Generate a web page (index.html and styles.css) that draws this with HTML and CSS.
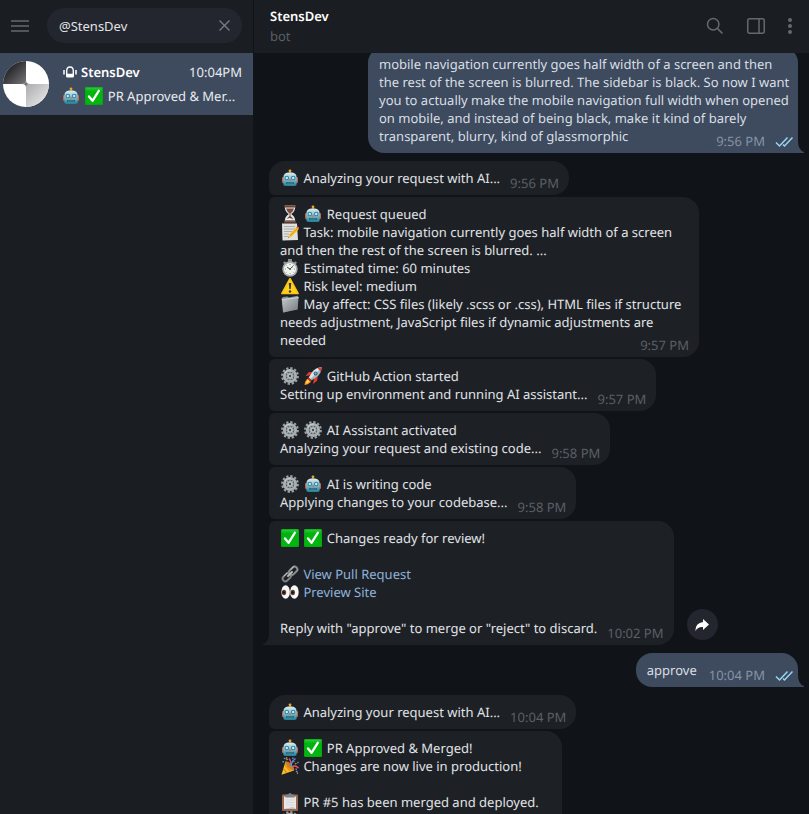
FILE: index.html
```html
<!DOCTYPE html>
<html lang="en">
<head>
<meta charset="utf-8">
<title>StensDev</title>
<link rel="stylesheet" href="styles.css">
</head>
<body>
<svg class="sprite" aria-hidden="true">
  <defs>
    <linearGradient id="g-robot" x1="0" y1="0" x2="0" y2="1"><stop offset="0" stop-color="#d9eef2"/><stop offset=".5" stop-color="#8fb9c4"/><stop offset="1" stop-color="#1f7f96"/></linearGradient>
    <linearGradient id="g-check" x1="0" y1="0" x2="0" y2="1"><stop offset="0" stop-color="#2fd03c"/><stop offset=".25" stop-color="#00b40d"/><stop offset="1" stop-color="#00b80e"/></linearGradient>
    <linearGradient id="g-metal" x1="0" y1="0" x2="1" y2="1"><stop offset="0" stop-color="#c3cacd"/><stop offset="1" stop-color="#74797c"/></linearGradient>
    <linearGradient id="g-dark" x1="0" y1="0" x2="1" y2="1"><stop offset=".1" stop-color="#111114"/><stop offset="1" stop-color="#77777b"/></linearGradient>
    <linearGradient id="g-light" x1="0" y1="0" x2="1" y2="1"><stop offset="0" stop-color="#aaaaad"/><stop offset="1" stop-color="#f2f2f2"/></linearGradient>
    <symbol id="robot" viewBox="0 0 18 18">
      <path d="M9 2v3" stroke="#c98a20" stroke-width="1.2"/><circle cx="9" cy="1.8" r="1.4" fill="#f5a623"/>
      <rect x="1" y="8" width="2" height="6" rx="1" fill="#b96a52"/><rect x="15" y="8" width="2" height="6" rx="1" fill="#b96a52"/>
      <path d="M2.3 9Q2.5 3.8 7 3.6h4q4.500.2 4.700 5.400v6q0 2-2 2H4.300q-2 0-2-2z" fill="url(#g-robot)"/>
      <circle cx="5.800" cy="9" r="2.300" fill="#2d83a5"/><circle cx="12.200" cy="9" r="2.300" fill="#2d83a5"/>
      <circle cx="5.800" cy="9" r="1.200" fill="#b9f2ff"/><circle cx="12.200" cy="9" r="1.200" fill="#b9f2ff"/>
      <path d="M9 9.600l1.200 2H7.800z" fill="#e05d4b"/><rect x="5" y="13" width="8" height="2" rx="1" fill="#155c70"/><path d="M6.500 14h5" stroke="#86c9d5" stroke-width="1" stroke-dasharray="1 1"/>
    </symbol>
    <symbol id="check" viewBox="0 0 18 18"><rect width="18" height="18" rx="1.500" fill="url(#g-check)"/><rect x=".5" y=".5" width="17" height="17" rx="1.500" fill="none" stroke="#0a9c16" stroke-opacity=".6"/><path d="M4 9.500l3.500 4.300 6.300-10" fill="none" stroke="#fff" stroke-width="2.300" stroke-linecap="round" stroke-linejoin="round"/></symbol>
    <symbol id="hourglass" viewBox="0 0 18 18">
      <path d="M3.800 2h10.400q0 4.500-4 7 4 2.500 4 7H3.800q0-4.500 4-7Q3.800 6.500 3.800 2z" fill="#dfe6e8"/>
      <path d="M5 3.500h8Q12 7 9 8.600 6 7 5 3.500z" fill="#7d4b35"/><path d="M8.600 8h.8v3q2.600 1.500 3 4.500H5.600q.4-3 3-4.500z" fill="#6f3d2b"/><path d="M4.500 15.500q3.500-5 9 0z" fill="#f3f6f7"/>
      <path d="M3 0h12v2.600H3zM3 15.400h12V18H3z" fill="#5d3b30"/><path d="M4 .7h10M4 16.300h10" stroke="#a07761" stroke-width=".7"/>
    </symbol>
    <symbol id="memo" viewBox="0 0 18 18">
      <path d="M1 .5h15l1 16.500-15.500.5z" fill="#dfe2df"/><path d="M3 3.500h11M3 6h11M3 8.500h9M3 11h5M3 13.500h4" stroke="#9ba09f" stroke-width=".8"/>
      <path d="M7 14.800l1-3L15 4.500q2 0 2.500 2L10 14z" fill="#f9bf22"/><path d="M15 4.500l1.100-1q2.200.2 2 2l-.6 1q-.5-1.600-2.500-2z" fill="#e35d50"/><path d="M7 14.800l1-3 2 2.200z" fill="#e9c28f"/><path d="M7 14.800l.4-1 .6.700z" fill="#333"/><path d="M9 13l7-7" stroke="#dd8d10" stroke-width=".7"/>
    </symbol>
    <symbol id="stopwatch" viewBox="0 0 18 18">
      <path d="M7 0h4v3H7zM2 3.800l1.600-1.600 1.800 1.600-1.600 1.700zM14.400 2.200L16 3.800l-1.600 1.700-1.600-1.700z" fill="#87908f"/>
      <circle cx="9" cy="10" r="7.700" fill="#a4abae"/><circle cx="9" cy="10" r="6.100" fill="#f1f2ee"/><path d="M9 5v1M9 14v1M4 10h1M13 10h1M5.500 6.500l.6.600M12.500 6.500l-.6.600M5.500 13.500l.6-.6M12.500 13.500l-.6-.6" stroke="#777" stroke-width=".8"/><path d="M9 10l3-2.700M9 10L6.500 8.500" stroke="#454b4d" stroke-width="1" stroke-linecap="round"/><circle cx="9" cy="10" r="1" fill="#5e6668"/>
    </symbol>
    <symbol id="warning" viewBox="0 0 18 18"><path d="M9 1.700L17 16.500H1z" fill="#fdd21c" stroke="#fdc414" stroke-width="1.700" stroke-linejoin="round"/><path d="M7.800 6h2.400l-.5 6H8.300z" fill="#34383a"/><circle cx="9" cy="14.500" r="1.200" fill="#34383a"/></symbol>
    <symbol id="folder" viewBox="0 0 18 18"><path d="M.5 3.500L2 2l4.500-.6L8 2.500l8.500-1.700 1 1.200-.8 12.500-14.700 3z" fill="#879196"/><path d="M1 4.500L17.500 2.500 15.500 14 2.500 17.500z" fill="url(#g-metal)"/><path d="M1 4.500L17.500 2.500" fill="none" stroke="#e0e7e9" stroke-width=".8"/></symbol>
    <symbol id="gear" viewBox="0 0 18 18">
      <circle cx="9" cy="9" r="7.800" fill="none" stroke="#9aa0a3" stroke-width="2.200" stroke-dasharray="2.300 1.784"/>
      <circle cx="9" cy="9" r="5.600" fill="none" stroke="#a9b0b3" stroke-width="3"/><circle cx="9" cy="9" r="4.200" fill="#5d6467"/>
      <path d="M9 4v10M4 9h10M5.500 5.500l7 7M12.500 5.500l-7 7" stroke="#a5acaf" stroke-width="1.200"/><circle cx="9" cy="9" r="2.800" fill="#b8bfc1"/><circle cx="9" cy="9" r="1.200" fill="#454c50"/>
      <path d="M4 6q2-3.500 6-3" fill="none" stroke="#d2d8da" stroke-width=".7"/>
    </symbol>
    <symbol id="rocket" viewBox="0 0 18 18">
      <path d="M5 12l2 2q-1 3-6.500 4Q1 14 3 12z" fill="#ff941f"/><path d="M4 12.800l1.500 1.500Q4.500 16 2 16.500q0-2.500 2-3.700z" fill="#ffe14d"/>
      <path d="M6.500 8L1.500 9.200 4.500 5.200 9 5zM10 11.500l-.8 5.500 4-3.500.5-4.500z" fill="#e43b2c"/>
      <path d="M17.700.3Q11 .5 7.500 6L4.700 10.500l2.800 2.800L12 10.500Q17.500 7 17.700.3z" fill="#a8b9c2"/><path d="M17.700.3Q12 .5 8 6l-3 4.600 1.300 1.300 9-9z" fill="#dae7eb"/><path d="M17.700.3q-2 .1-4 .8 1 2.300 3.200 3.200.7-2 .8-4z" fill="#db3b32"/><circle cx="11.600" cy="6.400" r="2" fill="#36596d"/><circle cx="11.600" cy="6.400" r="1.100" fill="#6db7da"/><path d="M4 11l3 3" stroke="#c43126" stroke-width="1.800"/>
    </symbol>
    <symbol id="link" viewBox="0 0 18 18"><g fill="none" stroke-linecap="round"><rect x="-4.700" y="-2.700" width="9.400" height="5.400" rx="2.700" transform="translate(12.200 5.800) rotate(-45)" stroke="#8b8f91" stroke-width="2"/><rect x="-4.700" y="-2.700" width="9.400" height="5.400" rx="2.700" transform="translate(5.800 12.200) rotate(-45)" stroke="#7d8183" stroke-width="2"/><path d="M7 11l4-4" stroke="#b7bcbe" stroke-width="2"/><path d="M10 4l3-2.700M3 11l3-3" stroke="#d4d7d8" stroke-width=".8"/></g></symbol>
    <symbol id="eyes" viewBox="0 0 18 18"><ellipse cx="4.600" cy="9" rx="4.300" ry="6.700" fill="#f8f8f8"/><ellipse cx="13.400" cy="9" rx="4.300" ry="6.700" fill="#f8f8f8"/><ellipse cx="3" cy="9.500" rx="2.200" ry="2.800" fill="#64402e"/><ellipse cx="11.800" cy="9.500" rx="2.200" ry="2.800" fill="#64402e"/><circle cx="2.700" cy="9.500" r="1.300" fill="#151313"/><circle cx="11.500" cy="9.500" r="1.300" fill="#151313"/></symbol>
    <symbol id="party" viewBox="0 0 18 18">
      <path d="M4.500 4.500L.5 17.700 13 13.500q-1-6.500-8.500-9z" fill="#fbbf29"/><path d="M4 8l5.500 6.500M2.500 12l3.500 3.700" stroke="#e48e15" stroke-width="1.400"/><ellipse cx="8.800" cy="9" rx="6" ry="2.200" transform="rotate(46 8.800 9)" fill="#c98222"/>
      <path d="M8.500 8Q11 5 8 1.500" fill="none" stroke="#ef4a5e" stroke-width="1.400"/><path d="M10 9.500q0-5 4.500-8" fill="none" stroke="#439ee0" stroke-width="1.400"/><path d="M11 10q3-2.500 6.500 1" fill="none" stroke="#e45269" stroke-width="1.400"/>
      <path d="M3 1l1.500 1M11.500 2l.8-1.500M16.500 6l1-1M15 14l1.500 1M1.500 4.500L3 5" stroke="#4c9ddd" stroke-width="1.400"/><path d="M5.500 3l1-1M14 7l1.500-.5M16 16.500l.8-.8M5 .8h1.300" stroke="#f3a22c" stroke-width="1.300"/><path d="M12.500 5l1-.7M14.500 12l1.500.3" stroke="#b66bd1" stroke-width="1.300"/>
    </symbol>
    <symbol id="clipboard" viewBox="0 0 18 18"><rect x="1" y="1.500" width="16" height="16.500" rx="1" fill="#9b684d"/><path d="M3 3.500h12V16H3z" fill="#e6e7e6"/><path d="M5 7h8M5 9.500h8M5 12h8" stroke="#d2d4d4" stroke-width=".8"/><path d="M5 1.500h2.200Q7.500 0 9 0t1.800 1.500H13l.7 3H4.300z" fill="#7b8386"/><path d="M3 16h12l-3-2z" fill="#bfc1bf"/></symbol>
    <symbol id="ticks" viewBox="0 0 18 12"><path d="M1 6.500L4.500 10 12.500 1.500M8 8.500L9.500 10l8-8.500" fill="none" stroke="#98d6f2" stroke-width="1.500"/></symbol>
    <symbol id="tail" viewBox="0 0 6 12"><path d="M0 0q0 9 6 11v1H0z" fill="currentColor"/></symbol>
  </defs>
</svg>

<div class="app">
  <aside class="sidebar">
    <div class="searchbar">
      <button class="icon-button" aria-label="Menu"><svg width="18" height="12" viewBox="0 0 18 12"><path d="M0 1h18M0 6h18M0 11h18" stroke="currentColor" stroke-width="1.500"/></svg></button>
      <div class="search">
        <input class="search-input" type="text" aria-label="Search" value="@StensDev">
        <button class="icon-button" aria-label="Clear"><svg width="11" height="11" viewBox="0 0 11 11"><path d="M.5.5l10 10M10.500.5l-10 10" stroke="#777b81" stroke-width="1.400"/></svg></button>
      </div>
    </div>
    <a class="chat" href="#chat">
      <svg class="avatar" viewBox="0 0 46 46" aria-hidden="true">
        <circle cx="23" cy="23" r="23" fill="#fff"/>
        <path d="M0 23A23 23 0 0 1 23 0v19q0 4-4 4z" fill="url(#g-dark)"/>
        <path d="M46 23A23 23 0 0 1 23 46V27q0-4 4-4z" fill="url(#g-light)"/>
        <path d="M19 23q4 0 4-4 0 4 4 4-4 0-4 4 0-4-4-4z" fill="#777"/>
      </svg>
      <span class="chat-body">
        <span class="chat-line">
          <svg width="14" height="12" viewBox="0 0 14 12" aria-hidden="true"><path d="M1 4v4.500M13 4v4.500" stroke="#fff" stroke-width="1.500"/><path d="M3.700 5Q3.700 1 7 1t3.300 4v3.500H3.700z" fill="none" stroke="#fff" stroke-width="1.400"/><path d="M3 8h8v2q0 1.500-1.500 1.500h-5Q3 11.500 3 10z" fill="#fff"/></svg>
          <strong class="name">StensDev</strong><span class="chat-time">10:04PM</span>
        </span>
        <span class="preview"><svg class="emoji"><use href="#robot"/></svg> <svg class="emoji"><use href="#check"/></svg> PR Approved &amp; Mer...</span>
      </span>
    </a>
  </aside>

  <main class="conversation" id="chat">
    <header class="topbar">
      <div class="peer"><h1 class="name">StensDev</h1><span class="status">bot</span></div>
      <div class="actions">
        <button class="icon-button" aria-label="Search messages"><svg width="18" height="18" viewBox="0 0 18 18"><circle cx="7.200" cy="7.200" r="5.700" fill="none" stroke="currentColor" stroke-width="1.500"/><path d="M11.300 11.300l5.200 5.200" stroke="currentColor" stroke-width="1.700"/></svg></button>
        <button class="icon-button" aria-label="Toggle info panel"><svg width="18" height="16" viewBox="0 0 18 16"><rect x=".75" y=".75" width="16.500" height="14.500" rx="2" fill="none" stroke="currentColor" stroke-width="1.500"/><path d="M12 1v14" stroke="currentColor" stroke-width="1.500"/></svg></button>
        <button class="icon-button" aria-label="More"><svg width="4" height="16" viewBox="0 0 4 16" fill="currentColor"><circle cx="2" cy="2" r="2"/><circle cx="2" cy="8" r="2"/><circle cx="2" cy="14" r="2"/></svg></button>
      </div>
    </header>

    <div class="viewport">
      <div class="messages">
        <div class="message out">mobile navigation currently goes half width of a screen and then the rest of the screen is blurred. The sidebar is black. So now I want you to actually make the mobile navigation full width when opened on mobile, and instead of being black, make it kind of barely transparent, blurry, kind of glassmorphic<span class="time">9:56 PM<svg class="ticks" aria-label="Read"><use href="#ticks"/></svg></span><svg class="tail"><use href="#tail"/></svg></div>

        <div class="group">
          <div class="message in"><svg class="emoji"><use href="#robot"/></svg> Analyzing your request with AI...<span class="time">9:56 PM</span></div>
          <div class="message in"><svg class="emoji"><use href="#hourglass"/></svg> <svg class="emoji"><use href="#robot"/></svg> Request queued<br><svg class="emoji"><use href="#memo"/></svg> Task: mobile navigation currently goes half width of a screen and then the rest of the screen is blurred. ...<br><svg class="emoji"><use href="#stopwatch"/></svg> Estimated time: 60 minutes<br><svg class="emoji"><use href="#warning"/></svg> Risk level: medium<br><svg class="emoji"><use href="#folder"/></svg> May affect: CSS files (likely .scss or .css), HTML files if structure needs adjustment, JavaScript files if dynamic adjustments are needed<span class="time">9:57 PM</span></div>
          <div class="message in"><svg class="emoji"><use href="#gear"/></svg> <svg class="emoji"><use href="#rocket"/></svg> GitHub Action started<br>Setting up environment and running AI assistant...<span class="time">9:57 PM</span></div>
          <div class="message in"><svg class="emoji"><use href="#gear"/></svg> <svg class="emoji"><use href="#gear"/></svg> AI Assistant activated<br>Analyzing your request and existing code...<span class="time">9:58 PM</span></div>
          <div class="message in"><svg class="emoji"><use href="#gear"/></svg> <svg class="emoji"><use href="#robot"/></svg> AI is writing code<br>Applying changes to your codebase...<span class="time">9:58 PM</span></div>
          <div class="row">
            <div class="message in"><svg class="emoji"><use href="#check"/></svg> <svg class="emoji"><use href="#check"/></svg> Changes ready for review!<br><br><svg class="emoji"><use href="#link"/></svg> <a class="link" href="#pull">View Pull Request</a><br><svg class="emoji"><use href="#eyes"/></svg> <a class="link" href="#preview">Preview Site</a><br><br>Reply with "approve" to merge or "reject" to discard.<span class="time">10:02 PM</span><svg class="tail"><use href="#tail"/></svg></div>
            <button class="forward" aria-label="Forward"><svg width="14" height="12" viewBox="0 0 14 12"><path d="M8 0l6 5.500L8 11V8Q3 7.500.3 12 .3 4 8 3z" fill="#fff"/></svg></button>
          </div>
        </div>

        <div class="message out">approve<span class="time">10:04 PM<svg class="ticks" aria-label="Read"><use href="#ticks"/></svg></span><svg class="tail"><use href="#tail"/></svg></div>

        <div class="group">
          <div class="message in"><svg class="emoji"><use href="#robot"/></svg> Analyzing your request with AI...<span class="time">10:04 PM</span></div>
          <div class="message in merged"><svg class="emoji"><use href="#robot"/></svg> <svg class="emoji"><use href="#check"/></svg> PR Approved &amp; Merged!<br><svg class="emoji"><use href="#party"/></svg> Changes are now live in production!<br><br><svg class="emoji"><use href="#clipboard"/></svg> PR #5 has been merged and deployed.<br><svg class="emoji"><use href="#gear"/></svg></div>
        </div>
      </div>
    </div>
  </main>
</div>
</body>
</html>
```
FILE: styles.css
```css
* { box-sizing: border-box; }

body {
  margin: 0;
  background: #101317;
  color: #e1e3e6;
  font: 13px/18px "Noto Sans", sans-serif;
  text-rendering: geometricPrecision;
}

.sprite { position: absolute; width: 0; height: 0; }

.app { display: flex; height: 100vh; overflow: hidden; }

.icon-button {
  flex: none;
  display: flex;
  padding: 0;
  border: 0;
  background: none;
  color: #65696e;
}

.name { margin: 0; font-size: 13px; font-weight: 600; line-height: 18px; color: #fff; }

/* Chat list */
.sidebar {
  flex: 0 0 254px;
  min-width: 0;
  background: #1a1d21;
  border-right: 1px solid #101317;
}

.searchbar {
  display: flex;
  align-items: center;
  gap: 18px;
  height: 53px;
  padding: 0 11px 2px;
}

.search {
  flex: 1;
  min-width: 0;
  display: flex;
  align-items: center;
  height: 35px;
  padding: 0 12px;
  border-radius: 18px;
  background: #23262e;
}

.search-input {
  flex: 1;
  min-width: 0;
  width: 0;
  padding: 0;
  border: 0;
  outline: 0;
  background: none;
  color: #e1e3e6;
  font: inherit;
}

.chat {
  display: flex;
  align-items: center;
  gap: 14px;
  height: 62px;
  padding: 0 11px 0 3px;
  background: #3e4a5d;
  color: #e8ecf1;
  text-decoration: none;
}

.avatar { flex: none; width: 46px; height: 46px; }
.chat-body { flex: 1; min-width: 0; display: flex; flex-direction: column; gap: 6px; }
.chat-line { display: flex; align-items: center; gap: 4px; }
.chat-time { margin-left: auto; }
.preview { overflow: hidden; white-space: nowrap; text-indent: -2px; }

/* Conversation */
.conversation { flex: 1; min-width: 0; display: flex; flex-direction: column; }

.topbar {
  flex: none;
  display: flex;
  align-items: center;
  justify-content: space-between;
  height: 53px;
  padding: 0 17px 1px 16px;
  background: #1a1d21;
}

.peer { display: flex; flex-direction: column; gap: 2px; }
.status { color: #5b5f65; }
.actions { display: flex; align-items: center; gap: 23px; }

.viewport { flex: 1; min-height: 0; overflow: hidden; }

.messages {
  display: flex;
  flex-direction: column;
  gap: 8px;
  margin-top: -6px;
  padding: 0 11px 0 15px;
}

.group { display: flex; flex-direction: column; align-items: flex-start; gap: 2px; }
.row { display: flex; align-items: flex-end; gap: 13px; }

.message {
  position: relative;
  max-width: 430px;
  padding: 8px 6px 8px 11px;
  border-radius: 16px;
}

.in { background: #1d2126; border-radius: 6px 16px 16px 6px; }
.in:first-child { border-top-left-radius: 16px; }
.row .in { border-radius: 6px 16px 16px 0; }
.out { align-self: flex-end; background: #3e4a5d; color: #d8dfe5; border-bottom-right-radius: 0; }
.merged { min-width: 293px; }

.time { float: right; margin: 5px 4px -5px 10px; color: #5b5f65; }
.out .time { margin-left: 12px; color: #8593a7; }
.ticks { width: 18px; height: 12px; margin: 0 -5px 0 10px; vertical-align: -2px; }

.tail { position: absolute; bottom: 0; width: 6px; height: 12px; }
.out .tail { left: 100%; color: #3e4a5d; }
.in .tail { right: 100%; color: #1d2126; transform: scaleX(-1); }

.emoji { width: 18px; height: 18px; margin: 0 1px; vertical-align: -4px; }
.link { color: #8fb1dc; text-decoration: none; }

.forward {
  flex: none;
  display: flex;
  align-items: center;
  justify-content: center;
  width: 31px;
  height: 31px;
  margin-bottom: 5px;
  padding: 0;
  border: 0;
  border-radius: 50%;
  background: #23262e;
}
```
